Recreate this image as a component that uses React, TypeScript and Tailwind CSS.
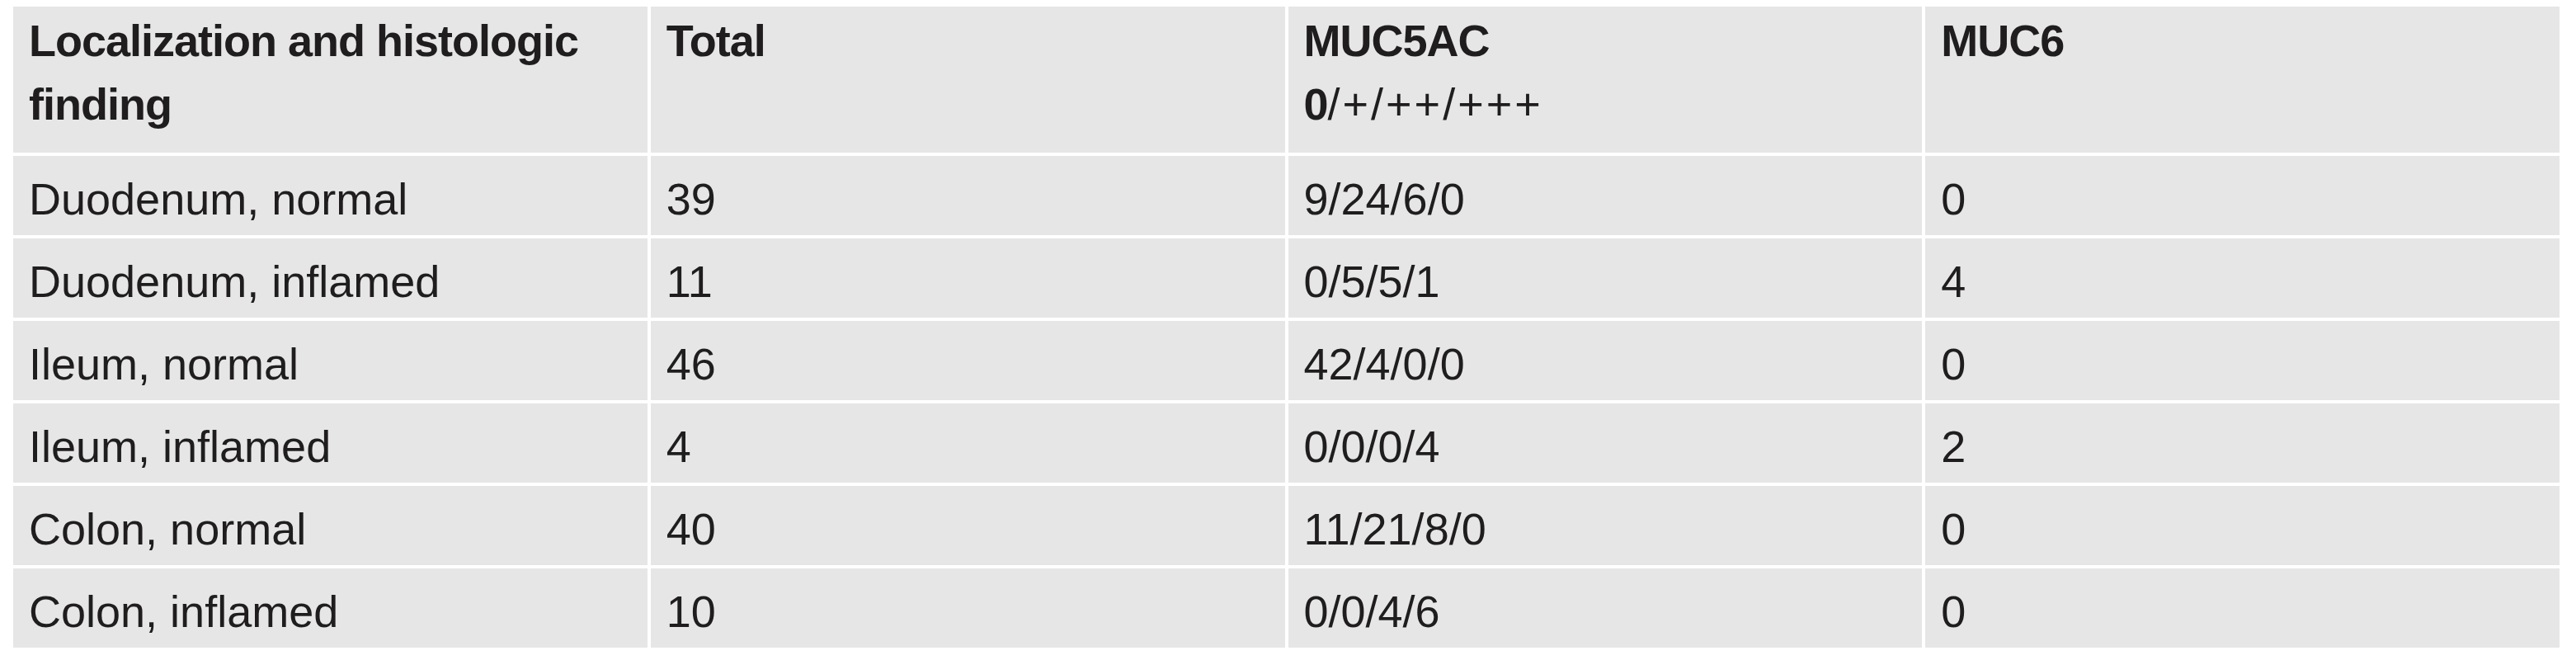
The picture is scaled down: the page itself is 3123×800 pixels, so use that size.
import React from 'react';

interface Row {
  site: string;
  total: string;
  muc5ac: string;
  muc6: string;
}

// Rows of the mucin expression table
const ROWS: Row[] = [
  { site: 'Duodenum, normal', total: '39', muc5ac: '9/24/6/0', muc6: '0' },
  { site: 'Duodenum, inflamed', total: '11', muc5ac: '0/5/5/1', muc6: '4' },
  { site: 'Ileum, normal', total: '46', muc5ac: '42/4/0/0', muc6: '0' },
  { site: 'Ileum, inflamed', total: '4', muc5ac: '0/0/0/4', muc6: '2' },
  { site: 'Colon, normal', total: '40', muc5ac: '11/21/8/0', muc6: '0' },
  { site: 'Colon, inflamed', total: '10', muc5ac: '0/0/4/6', muc6: '0' },
];

const headCell = 'h-[177px] bg-[#e6e6e6] pl-[19px] pr-[19px] pt-[3px] font-bold tracking-[-1px]';
const bodyCell = 'h-[96px] bg-[#e6e6e6] pl-[19px] pr-[19px] pt-[14px]';

const App = () => {
  return (
    <div className="min-h-screen bg-white pt-[8px] pl-[16px]">
      <div className="grid w-[3087px] grid-cols-4 gap-[4px] font-['Liberation_Sans',Arial,sans-serif] text-[54px] leading-[77px] text-[#1f1d1d]">
        {/* Header */}
        <div className={headCell}>Localization and histologic finding</div>
        <div className={headCell}>Total</div>
        <div className={headCell}>
          MUC5AC
          <br />
          <span>0</span>
          <span className="font-normal tracking-[3px]">/+/++/+++</span>
        </div>
        <div className={headCell}>MUC6</div>

        {/* Body */}
        {ROWS.map((row) => (
          <React.Fragment key={row.site}>
            <div className={bodyCell}>{row.site}</div>
            <div className={bodyCell}>{row.total}</div>
            <div className={bodyCell}>{row.muc5ac}</div>
            <div className={bodyCell}>{row.muc6}</div>
          </React.Fragment>
        ))}
      </div>
    </div>
  );
};

export default App;
